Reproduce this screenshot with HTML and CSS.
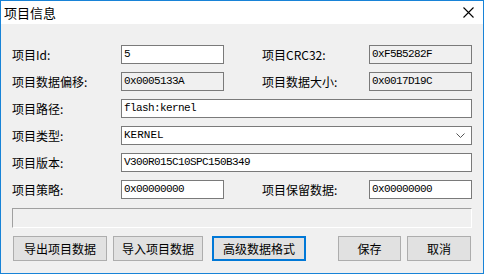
FILE: index.html
```html
<!DOCTYPE html>
<html lang="zh-CN">
<head>
    <meta charset="UTF-8">
    <title>项目信息</title>
    <link rel="stylesheet" href="styles.css">
</head>
<body>
    <div class="window">
        <div class="titlebar">
            <span class="title">项目信息</span>
            <svg class="close" width="11" height="11" viewBox="0 0 11 11">
                <path d="M0.5 0.5 L10.5 10.5 M10.5 0.5 L0.5 10.5" stroke="#000" stroke-width="1.1" fill="none"/>
            </svg>
        </div>
        <div class="client">
            <div class="form">
                <label>项目Id:</label>
                <div class="field">5</div>
                <span></span>
                <label>项目CRC32:</label>
                <div class="field readonly">0xF5B5282F</div>

                <label>项目数据偏移:</label>
                <div class="field readonly">0x0005133A</div>
                <span></span>
                <label>项目数据大小:</label>
                <div class="field readonly">0x0017D19C</div>

                <label>项目路径:</label>
                <div class="field wide">flash:kernel</div>

                <label>项目类型:</label>
                <div class="field wide combo">
                    <span>KERNEL</span>
                    <svg width="9" height="5" viewBox="0 0 9 5">
                        <polyline points="0.5,0.5 4.5,4.5 8.5,0.5" stroke="#555" fill="none"/>
                    </svg>
                </div>

                <label>项目版本:</label>
                <div class="field wide">V300R015C10SPC150B349</div>

                <label>项目策略:</label>
                <div class="field">0x00000000</div>
                <span></span>
                <label>项目保留数据:</label>
                <div class="field">0x00000000</div>
            </div>
            <div class="progress"></div>
            <div class="buttons">
                <button class="b1">导出项目数据</button>
                <button class="b2">导入项目数据</button>
                <button class="b3 focused">高级数据格式</button>
                <button class="b4">保存</button>
                <button class="b5">取消</button>
            </div>
        </div>
    </div>
</body>
</html>
```

FILE: styles.css
```css
body {
    margin: 0;
    font-family: "Noto Sans CJK SC", sans-serif;
    font-size: 12px;
}
.window {
    width: 484px;
    height: 274px;
    box-sizing: border-box;
    border: 1px solid #1883d7;
    background-color: #f0f0f0;
    display: flex;
    flex-direction: column;
}
.titlebar {
    height: 23px;
    background-color: #fff;
    display: flex;
    align-items: center;
    justify-content: space-between;
    padding: 0 9px 0 3px;
}
.title {
    font-size: 13px;
    color: #000;
}
.close {
    display: block;
}
.client {
    flex: 1;
    padding: 21px 0 0 11px;
}
.form {
    display: grid;
    grid-template-columns: 109px 103px 38px 107px 103px;
    grid-auto-rows: 19px;
    row-gap: 8px;
    align-items: center;
}
.form label {
    color: #000;
    line-height: 19px;
    white-space: nowrap;
}
.field {
    height: 19px;
    box-sizing: border-box;
    border: 1px solid #7a7a7a;
    background-color: #fff;
    font-family: "Liberation Mono", monospace;
    font-size: 11px;
    letter-spacing: -0.6px;
    line-height: 17px;
    padding-left: 2px;
    color: #000;
    white-space: nowrap;
    overflow: hidden;
}
.readonly {
    background-color: #f0f0f0;
}
.wide {
    grid-column: 2 / 6;
}
.combo {
    display: flex;
    align-items: center;
    justify-content: space-between;
    padding-right: 6px;
    letter-spacing: 0;
}
.combo svg {
    display: block;
}
.progress {
    width: 460px;
    height: 20px;
    box-sizing: border-box;
    margin-top: 9px;
    border-top: 1px solid #a0a0a0;
    border-left: 1px solid #a0a0a0;
    border-bottom: 1px solid #fff;
    border-right: 1px solid #fff;
    background-color: #f0f0f0;
}
.buttons {
    display: flex;
    margin-top: 8px;
}
.buttons button {
    height: 25px;
    box-sizing: border-box;
    border: 1px solid #adadad;
    background-color: #e1e1e1;
    font-family: "Noto Sans CJK SC", sans-serif;
    font-size: 12px;
    color: #000;
    padding: 0;
    margin: 0;
}
.buttons .focused {
    border: 2px solid #0078d7;
}
.b1 {
    width: 94px;
    margin-left: 1px !important;
}
.b2 {
    width: 90px;
    margin-left: 6px !important;
}
.b3 {
    width: 94px;
    margin-left: 9px !important;
}
.b4 {
    width: 63px;
    margin-left: 32px !important;
}
.b5 {
    width: 64px;
    margin-left: 6px !important;
}
```
